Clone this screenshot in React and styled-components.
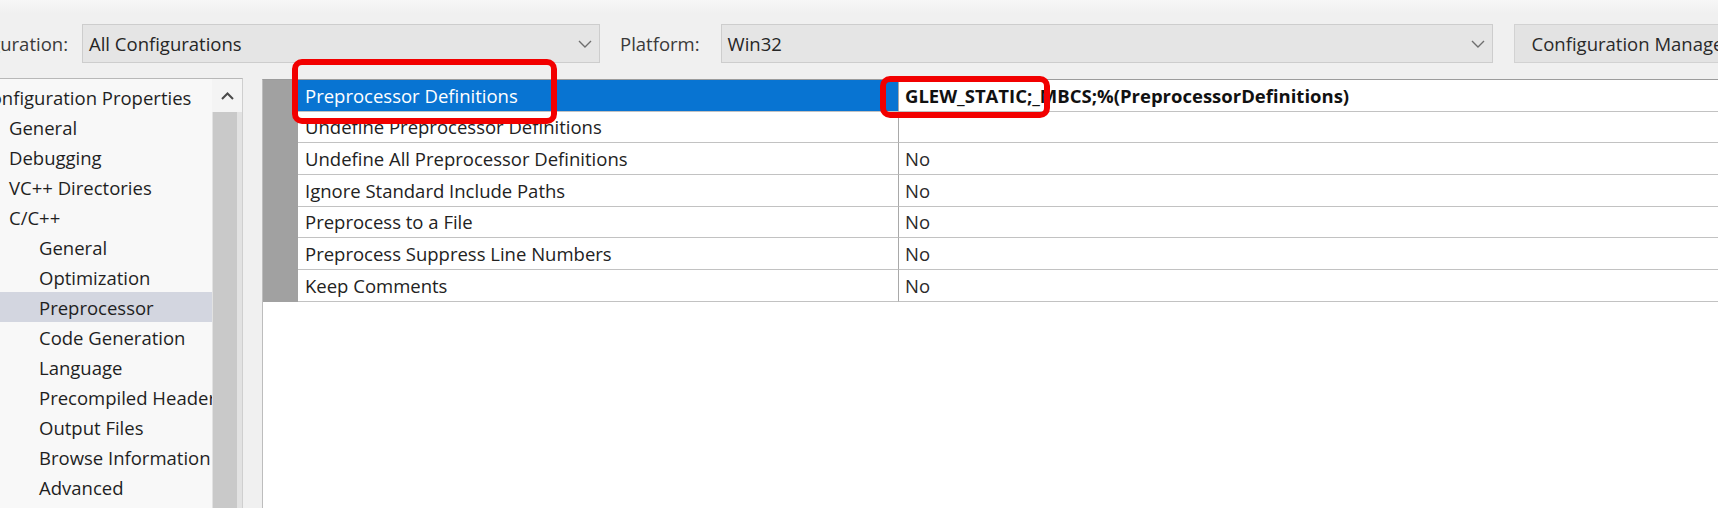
import styled, { createGlobalStyle } from 'styled-components'

const GlobalStyle = createGlobalStyle`
  html, body {
    margin: 0;
    padding: 0;
    background: #f0f0f0;
  }
  body {
    font-family: "Open Sans", "Noto Sans", sans-serif;
    color: #1f1f1f;
  }
`

const treeItems = [
  { label: 'Configuration Properties', level: 0 },
  { label: 'General', level: 1 },
  { label: 'Debugging', level: 1 },
  { label: 'VC++ Directories', level: 1 },
  { label: 'C/C++', level: 1 },
  { label: 'General', level: 2 },
  { label: 'Optimization', level: 2 },
  { label: 'Preprocessor', level: 2, active: true },
  { label: 'Code Generation', level: 2 },
  { label: 'Language', level: 2 },
  { label: 'Precompiled Headers', level: 2 },
  { label: 'Output Files', level: 2 },
  { label: 'Browse Information', level: 2 },
  { label: 'Advanced', level: 2 },
  { label: 'All Options', level: 2 },
]

const properties = [
  { name: 'Preprocessor Definitions', value: 'GLEW_STATIC;_MBCS;%(PreprocessorDefinitions)', selected: true },
  { name: 'Undefine Preprocessor Definitions', value: '' },
  { name: 'Undefine All Preprocessor Definitions', value: 'No' },
  { name: 'Ignore Standard Include Paths', value: 'No' },
  { name: 'Preprocess to a File', value: 'No' },
  { name: 'Preprocess Suppress Line Numbers', value: 'No' },
  { name: 'Keep Comments', value: 'No' },
]

const ChevronDown = () => (
  <svg width="14" height="8" viewBox="0 0 14 8">
    <path d="M1 1 L7 7 L13 1" fill="none" stroke="#6e6e6e" strokeWidth="1.4" />
  </svg>
)

const ChevronUp = () => (
  <svg width="13" height="8" viewBox="0 0 13 8">
    <path d="M1 7 L6.5 1.5 L12 7" fill="none" stroke="#4a4a4a" strokeWidth="2" />
  </svg>
)

export default function App() {
  return (
    <Page>
      <GlobalStyle />
      <TopBar>
        <LabelBox $width={68}>
          <span>Configuration:</span>
        </LabelBox>
        <Combo $gap={14} $width={518}>
          <span>All Configurations</span>
          <ChevronDown />
        </Combo>
        <PlainLabel $gap={20}>Platform:</PlainLabel>
        <Combo $gap={21} $width={772}>
          <span>Win32</span>
          <ChevronDown />
        </Combo>
        <ManagerButton>Configuration Manager...</ManagerButton>
      </TopBar>

      <Body>
        <TreePanel>
          <TreeList>
            {treeItems.map((item, i) => (
              <TreeItem key={i} $active={item.active}>
                <TreeLabel $level={item.level}>{item.label}</TreeLabel>
              </TreeItem>
            ))}
          </TreeList>
          <ScrollBar>
            <ScrollButton>
              <ChevronUp />
            </ScrollButton>
            <ScrollThumb />
          </ScrollBar>
        </TreePanel>

        <GridPanel>
          {properties.map((p, i) => (
            <PropRow key={i}>
              <Gutter />
              <NameCell $selected={p.selected}>{p.name}</NameCell>
              <ValueCell $bold={p.selected}>{p.value}</ValueCell>
            </PropRow>
          ))}
        </GridPanel>
      </Body>

      <Marker $x={292} $y={59} $w={265} $h={65} />
      <Marker $x={880} $y={76} $w={170} $h={42} />
    </Page>
  )
}

const Page = styled.div`
  position: relative;
  width: 1718px;
  height: 508px;
  overflow: hidden;
  background: #f0f0f0;
  font-size: 18.5px;
`
const TopBar = styled.div`
  display: flex;
  align-items: flex-start;
  height: 78px;
  box-sizing: border-box;
  padding-top: 24px;
  background: linear-gradient(#f7f7f7 0, #f0f0f0 14px);
  white-space: nowrap;
  overflow: hidden;
`
const LabelBox = styled.div`
  width: ${(p) => p.$width}px;
  flex-shrink: 0;
  height: 39px;
  display: flex;
  align-items: center;
  justify-content: flex-end;
  overflow: hidden;
  color: #3a3a3a;
`
const PlainLabel = styled.div`
  margin-left: ${(p) => p.$gap}px;
  flex-shrink: 0;
  height: 39px;
  display: flex;
  align-items: center;
  color: #3a3a3a;
`
const Combo = styled.div`
  margin-left: ${(p) => p.$gap}px;
  width: ${(p) => p.$width}px;
  height: 39px;
  box-sizing: border-box;
  flex-shrink: 0;
  display: flex;
  align-items: center;
  justify-content: space-between;
  padding: 0 7px 0 6px;
  background: #e5e5e5;
  border: 1px solid #cdcdcd;
  color: #262626;
`
const ManagerButton = styled.div`
  margin-left: 21px;
  width: 260px;
  height: 39px;
  box-sizing: border-box;
  flex-shrink: 0;
  display: flex;
  align-items: center;
  padding-left: 17px;
  background: #e3e3e3;
  border: 1px solid #d2d2d2;
  color: #2a2a2a;
`
const Body = styled.div`
  display: flex;
  align-items: flex-start;
  height: 430px;
`
const TreePanel = styled.div`
  width: 243px;
  flex-shrink: 0;
  height: 100%;
  box-sizing: border-box;
  display: flex;
  background: #f8f8f8;
  border-top: 1px solid #b8b8b8;
  border-right: 1px solid #cfcfcf;
`
const TreeList = styled.div`
  width: 212px;
  padding-top: 3px;
  overflow: hidden;
  white-space: nowrap;
`
const TreeItem = styled.div`
  height: 30px;
  display: flex;
  align-items: center;
  background: ${(p) => (p.$active ? '#d3d6e0' : 'transparent')};
`
const TreeLabel = styled.span`
  margin-left: ${(p) => p.$level * 30 - 21}px;
`
const ScrollBar = styled.div`
  width: 30px;
  display: flex;
  flex-direction: column;
  background: #e2e2e2;
`
const ScrollButton = styled.div`
  height: 33px;
  display: flex;
  align-items: center;
  justify-content: center;
  background: #f4f4f4;
`
const ScrollThumb = styled.div`
  flex: 1;
  width: 24px;
  margin-left: 1px;
  background: #c9c9c9;
`
const GridPanel = styled.div`
  flex: 1;
  height: 100%;
  margin-left: 19px;
  margin-top: 1px;
  background: #ffffff;
  border-top: 1px solid #9c9c9c;
  border-left: 1px solid #bdbdbd;
`
const PropRow = styled.div`
  display: flex;
  height: 31.67px;
  white-space: nowrap;
`
const Gutter = styled.div`
  width: 35px;
  flex-shrink: 0;
  background: #a1a1a1;
`
const NameCell = styled.div`
  width: 600px;
  flex-shrink: 0;
  box-sizing: border-box;
  display: flex;
  align-items: center;
  padding-left: 7px;
  border-bottom: 1px solid #c2c2c2;
  background: ${(p) => (p.$selected ? '#0874d2' : '#ffffff')};
  color: ${(p) => (p.$selected ? '#ffffff' : '#222222')};
`
const ValueCell = styled.div`
  flex: 1;
  box-sizing: border-box;
  display: flex;
  align-items: center;
  padding-left: 6px;
  border-left: 1px solid #a9a9a9;
  border-bottom: 1px solid #c2c2c2;
  font-weight: ${(p) => (p.$bold ? 700 : 400)};
  color: ${(p) => (p.$bold ? '#111111' : '#2a2a2a')};
`
const Marker = styled.div`
  position: absolute;
  left: ${(p) => p.$x}px;
  top: ${(p) => p.$y}px;
  width: ${(p) => p.$w}px;
  height: ${(p) => p.$h}px;
  box-sizing: border-box;
  border: 6px solid #f20000;
  border-radius: 10px;
  pointer-events: none;
`
